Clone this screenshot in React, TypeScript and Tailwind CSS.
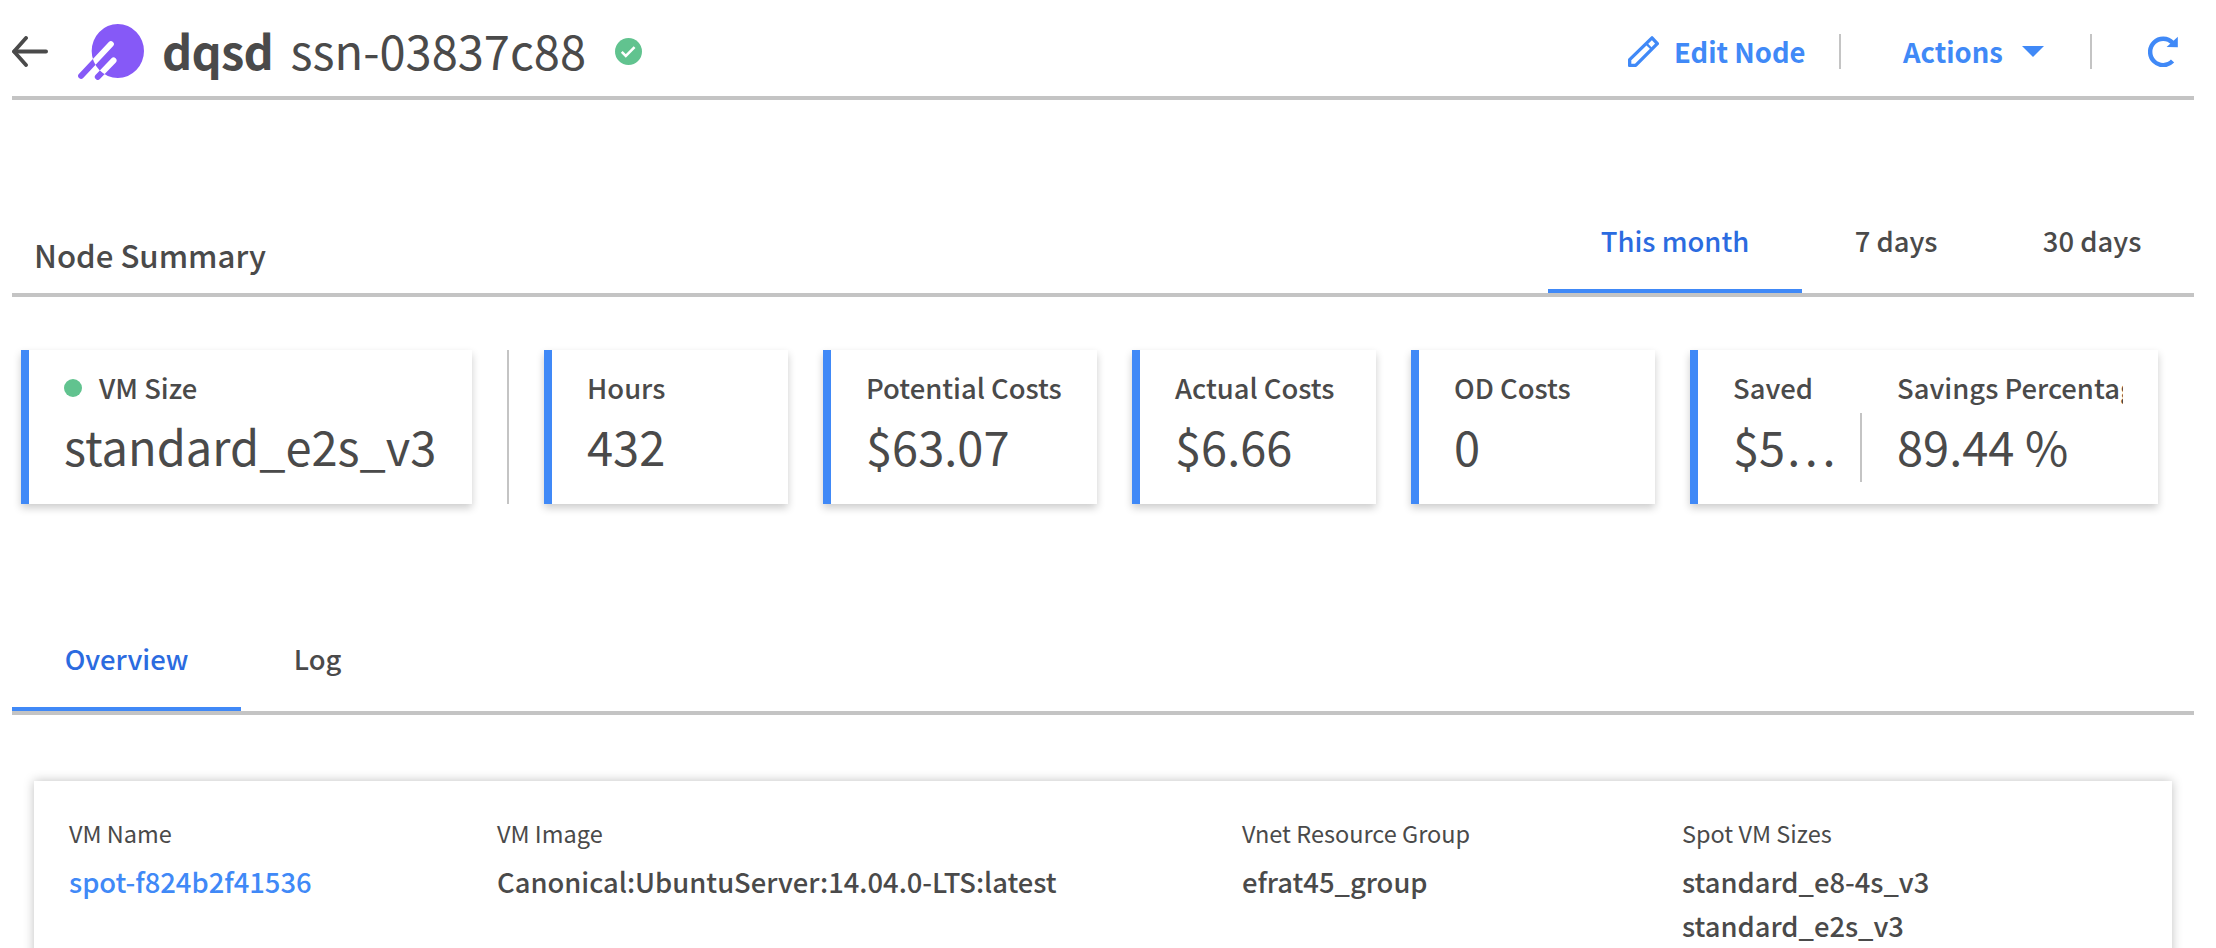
import type { ReactNode } from "react";

function BackArrow() {
  return (
    <svg viewBox="36 78 108 93" className="h-[31px] w-9" fill="none" stroke="#4a4a4a" strokeLinecap="round" strokeLinejoin="round">
      <path d="M138 124.5H43" strokeWidth="12" />
      <path d="M78 84L42 124.5L78 165" strokeWidth="11.5" />
    </svg>
  );
}

function Logo() {
  return (
    <svg viewBox="234 42 198 168" className="h-14 w-[66px]">
      <path
        fill="#8659f7"
        fillRule="evenodd"
        d="M432 123A78.5 81 0 0 1 275 123A78.5 81 0 0 1 432 123Z M236.5 191.8L326.5 95.8A9 9 0 0 1 339.5 108.2L249.5 204.2A9 9 0 0 1 236.5 191.8Z M286.5 194.8L334.5 144.8A9 9 0 0 1 347.5 157.2L299.5 207.2A9 9 0 0 1 286.5 194.8Z"
      />
    </svg>
  );
}

function CheckBadge() {
  return (
    <svg viewBox="46 39 80 80" className="size-[27px]">
      <circle cx="86" cy="79" r="40" fill="#61c38f" />
      <path d="M66 80L78 92L104 66" fill="none" stroke="#fff" strokeWidth="7.5" />
    </svg>
  );
}

function Pencil() {
  return (
    <svg viewBox="54 50 93 93" className="size-[31px]" fill="none" stroke="#4089f7" strokeLinejoin="round">
      <path d="M126 55.5L142 73L77 138L59 138.5L59 121Z" strokeWidth="10" />
      <path d="M109 73L125 89" strokeWidth="7" />
    </svg>
  );
}

function Refresh() {
  return (
    <svg viewBox="474 48 90 94" className="h-[31px] w-[30px]">
      <path d="M548 124A39.5 40 0 1 1 548 68.5" fill="none" stroke="#4089f7" strokeWidth="13.5" />
      <path d="M564 50V82L530 81Z" fill="#4089f7" />
    </svg>
  );
}

function Tab({ children, active }: { children: ReactNode; active?: boolean }) {
  return (
    <div
      className={
        active
          ? "border-b-4 border-[#4089f7] px-[52.7px] pb-[29px] text-[#2b6be0]"
          : "border-b-4 border-transparent px-[52.7px] pb-[29px]"
      }
    >
      {children}
    </div>
  );
}

function Card({ className, children }: { className: string; children: ReactNode }) {
  return (
    <div className={`h-[154px] shrink-0 border-l-8 border-[#4089f7] bg-white pt-[19px] pl-[35px] shadow-[0_4px_8px_rgba(0,0,0,0.2)] ${className}`}>
      {children}
    </div>
  );
}

function Stat({ label, children }: { label: ReactNode; children: ReactNode }) {
  return (
    <div className="whitespace-nowrap">
      <div className="flex h-9 items-center text-[27.4px] leading-9 font-medium">{label}</div>
      <div className="mt-[11px] text-[47px] leading-[60px]">{children}</div>
    </div>
  );
}

function Field({ label, className, children }: { label: string; className: string; children: ReactNode }) {
  return (
    <div className={`shrink-0 whitespace-nowrap ${className}`}>
      <div className="text-[23.5px] leading-9">{label}</div>
      <div className="mt-2 text-[27.35px] leading-[44px] font-medium">{children}</div>
    </div>
  );
}

export default function App() {
  return (
    <div className="h-[948px] w-[2216px] overflow-hidden bg-white pr-[22px] pl-3 font-['Noto_Sans_CJK_SC',sans-serif] text-[#4a4a4a]">
      <header className="flex h-[100px] items-center border-b-4 border-[#c4c4c4] pt-[7px] whitespace-nowrap">
        <BackArrow />
        <div className="ml-[30px]">
          <Logo />
        </div>
        <h1 className="ml-[18px] flex w-[453px] pb-1 text-[47px] leading-[60px]">
          <span className="w-[128.5px] font-bold tracking-[-0.8px]">dqsd</span>
          <span>ssn-03837c88</span>
        </h1>
        <CheckBadge />
        <div className="ml-auto flex items-center text-[27.4px] leading-9 font-bold text-[#4089f7]">
          <Pencil />
          <span className="ml-[15px] w-[133px] pb-0.5">Edit Node</span>
          <span className="ml-8 h-[35px] w-0.5 bg-[#c4c4c4]" />
          <span className="ml-[62px] w-[101px] pb-0.5">Actions</span>
          <svg viewBox="0 0 22 11" className="ml-[18px] h-[11px] w-[22px]">
            <path d="M0 0H22L11 11Z" fill="#4089f7" />
          </svg>
          <span className="ml-[46px] h-[35px] w-0.5 bg-[#c4c4c4]" />
          <div className="mr-4 ml-14">
            <Refresh />
          </div>
        </div>
      </header>

      <section className="flex h-[197px] items-end justify-between border-b-4 border-[#c4c4c4]">
        <h2 className="mb-[18px] pl-[22px] text-[31.2px] leading-10 font-medium">Node Summary</h2>
        <nav className="flex text-[27.4px] leading-10 font-medium">
          <Tab active>This month</Tab>
          <Tab>7 days</Tab>
          <Tab>30 days</Tab>
        </nav>
      </section>

      <section className="mt-[53px] flex pl-[9px]">
        <Card className="w-[451px]">
          <Stat
            label={
              <>
                <span className="mt-0.5 mr-[17px] size-[18px] rounded-full bg-[#61c38f]" />
                VM Size
              </>
            }
          >
            standard_e2s_v3
          </Stat>
        </Card>
        <div className="mx-[35px] w-0.5 shrink-0 bg-[#c4c4c4]" />
        <Card className="w-[244px]">
          <Stat label="Hours">432</Stat>
        </Card>
        <Card className="ml-[35px] w-[274px]">
          <Stat label="Potential Costs">$63.07</Stat>
        </Card>
        <Card className="ml-[35px] w-[244px]">
          <Stat label="Actual Costs">$6.66</Stat>
        </Card>
        <Card className="ml-[35px] w-[244px]">
          <Stat label="OD Costs">0</Stat>
        </Card>
        <Card className="ml-[35px] flex w-[468px]">
          <div className="w-[127px]">
            <Stat label="Saved">
              $5<span className="pl-0.5 tracking-[4.6px]">...</span>
            </Stat>
          </div>
          <div className="mt-[44px] h-[69px] w-0.5 bg-[#c4c4c4]" />
          <div className="ml-[35px] h-[120px] w-[226px] overflow-hidden">
            <Stat label="Savings Percentage">89.44 %</Stat>
          </div>
        </Card>
      </section>

      <nav className="flex h-[211px] items-end border-b-4 border-[#c4c4c4] text-[27.4px] leading-10 font-medium">
        <Tab active>Overview</Tab>
        <Tab>Log</Tab>
      </nav>

      <section className="mt-[66px] mr-[22px] ml-[22px] flex h-[240px] bg-white pt-[34px] pl-[35px] shadow-[0_0_10px_rgba(0,0,0,0.25)]">
        <Field label="VM Name" className="w-[428px]">
          <span className="text-[#4089f7]">spot-f824b2f41536</span>
        </Field>
        <Field label="VM Image" className="w-[745px]">
          Canonical:UbuntuServer:14.04.0-LTS:latest
        </Field>
        <Field label="Vnet Resource Group" className="w-[440px]">
          efrat45_group
        </Field>
        <Field label="Spot VM Sizes" className="">
          <div>standard_e8-4s_v3</div>
          <div>standard_e2s_v3</div>
        </Field>
      </section>
    </div>
  );
}
